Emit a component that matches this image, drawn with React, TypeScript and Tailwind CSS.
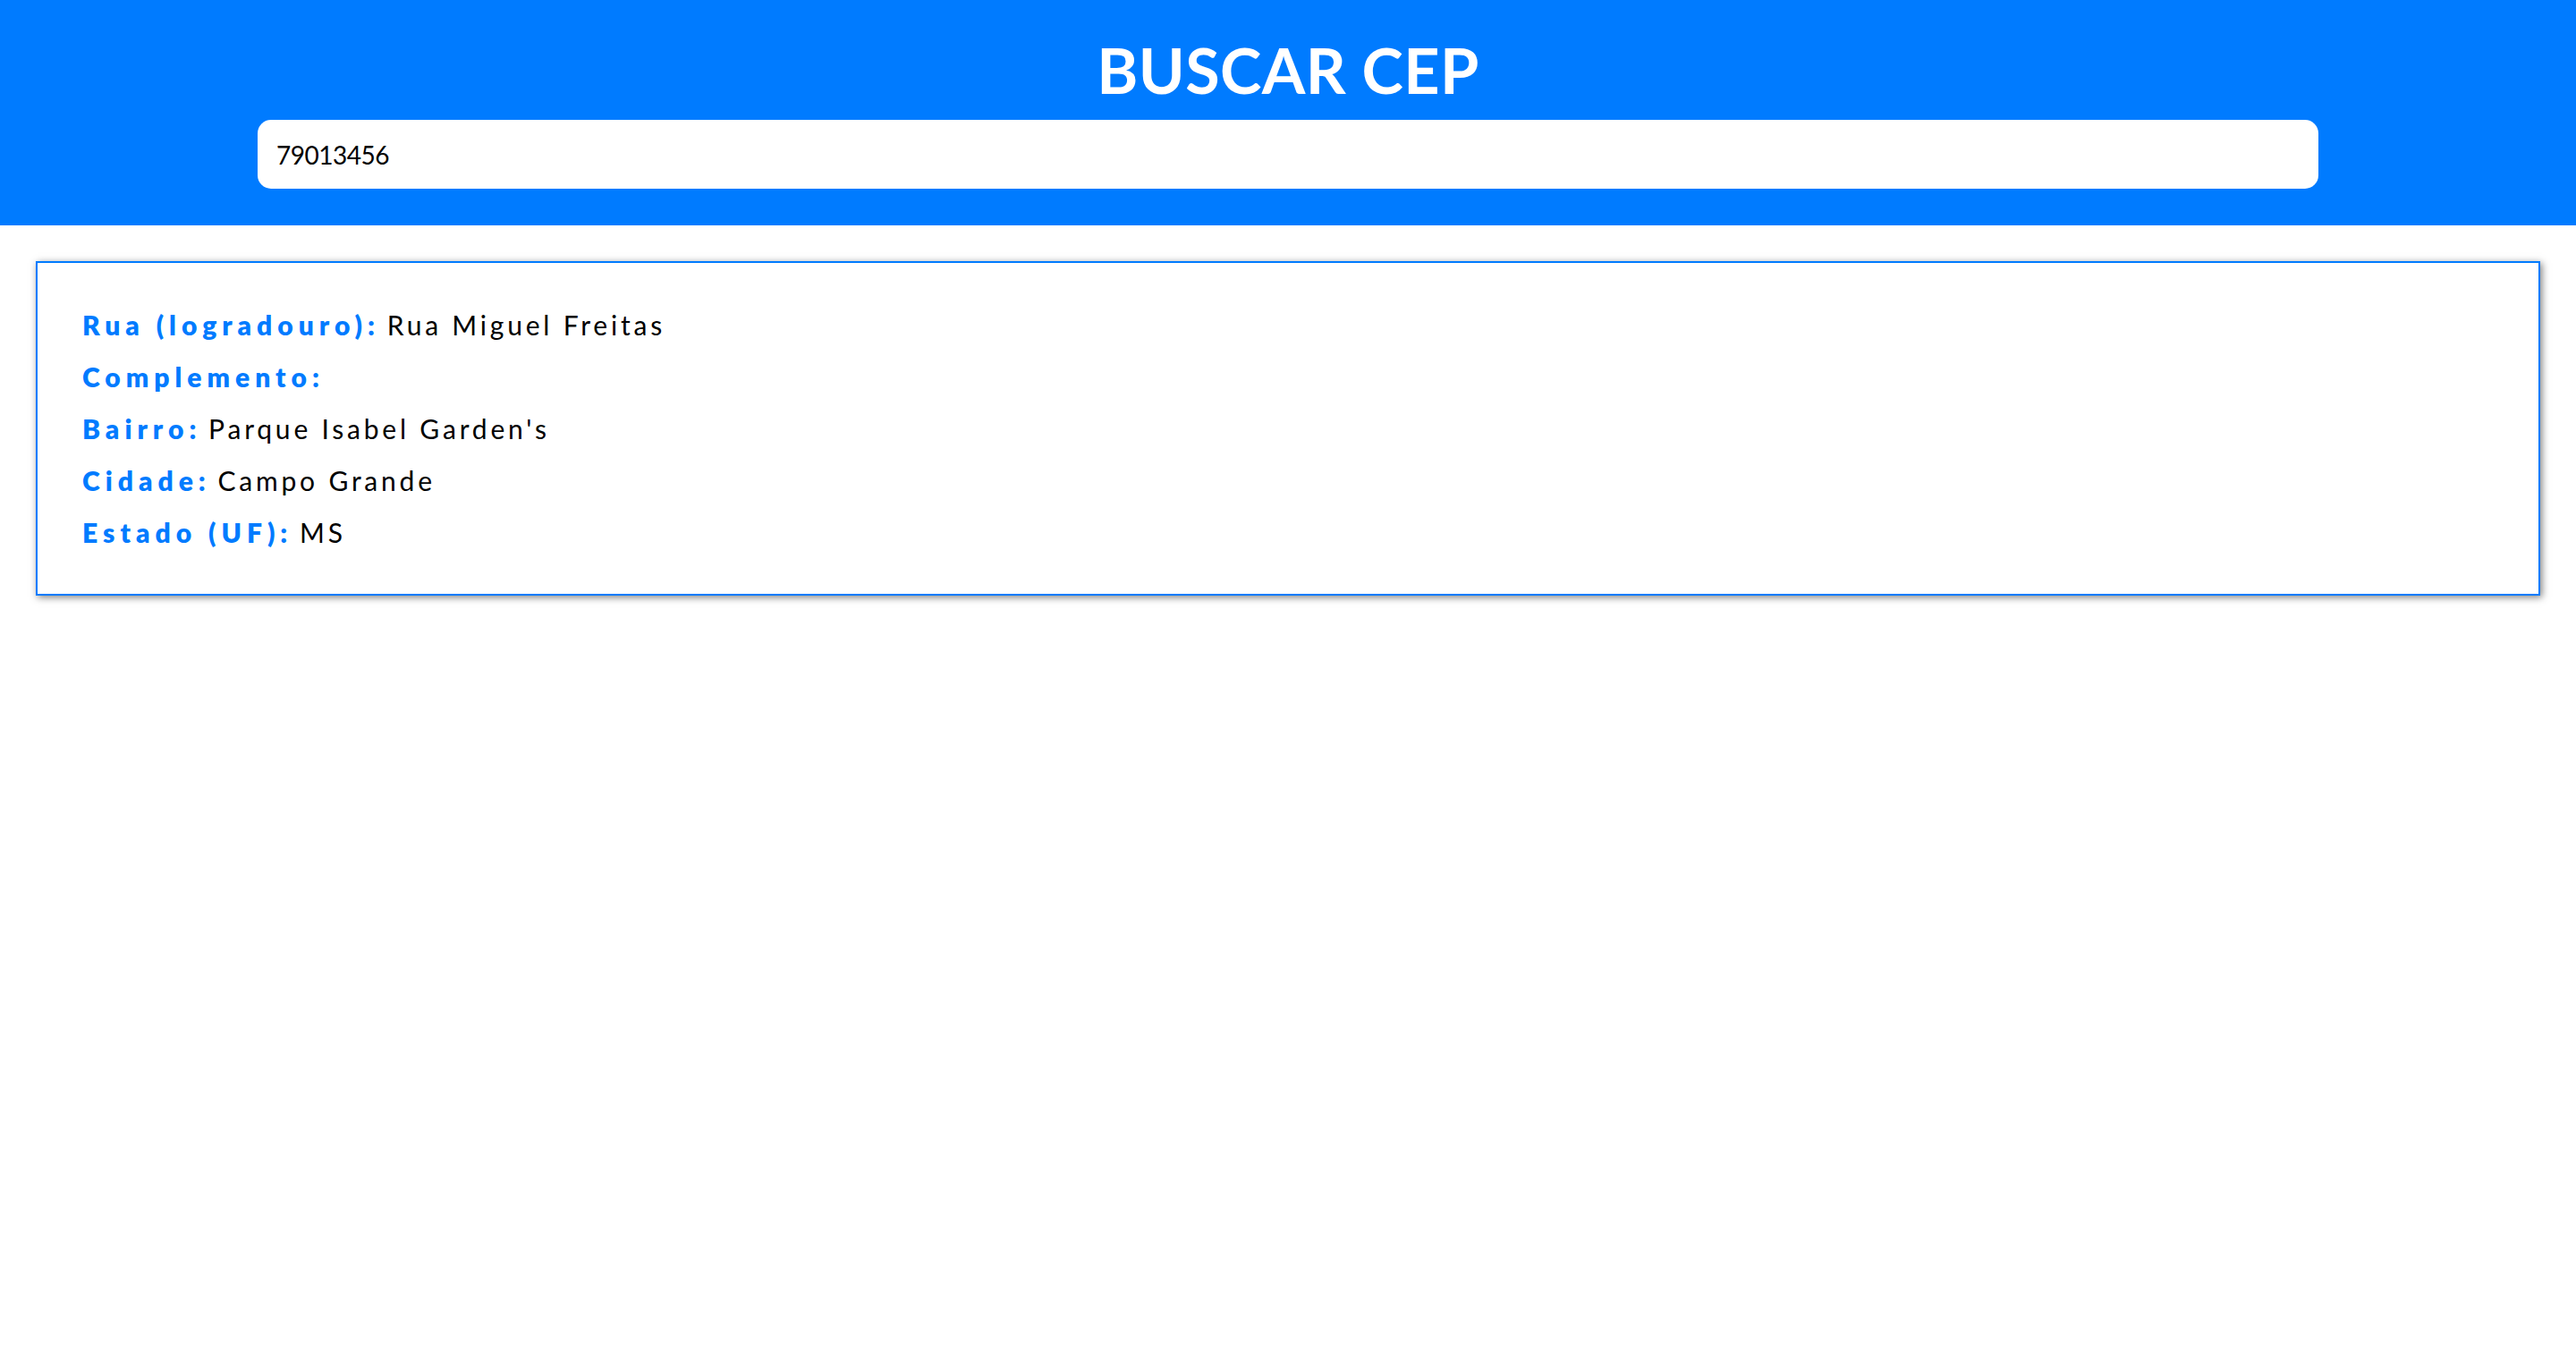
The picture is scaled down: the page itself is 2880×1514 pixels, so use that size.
import React, { useState } from "react";

const endereco = [
  { label: "Rua (logradouro):", valor: "Rua Miguel Freitas" },
  { label: "Complemento:", valor: "" },
  { label: "Bairro:", valor: "Parque Isabel Garden's" },
  { label: "Cidade:", valor: "Campo Grande" },
  { label: "Estado (UF):", valor: "MS" },
];

const App = () => {
  const [cep, setCep] = useState("79013456");

  return (
    <div className="min-h-screen bg-white font-['Lato','Liberation_Sans',sans-serif]">
      <header className="bg-[#007bff] h-[252px] flex flex-col items-center pt-[38px]">
        <h1 className="text-white font-bold text-[70px] leading-[80px] tracking-[0.4px]">
          BUSCAR CEP
        </h1>
        <input
          className="mt-[16px] w-[80%] h-[77px] rounded-[15px] bg-white px-[21px] text-[28px] tracking-[-0.5px] text-black outline-none"
          value={cep}
          onChange={(e) => setCep(e.target.value)}
        />
      </header>

      <section className="mx-[40px] mt-[40px] border-2 border-[#007bff] bg-white shadow-[2px_2px_8px_rgba(0,0,0,0.5)] px-[50px] pt-[49px] pb-[49px]">
        <div className="flex flex-col gap-[18px]">
          {endereco.map((item) => (
            <p key={item.label} className="text-[30px] leading-[40px]">
              <b className="text-[#007bff] font-extrabold tracking-[6px]">{item.label}</b>{" "}
              <span className="text-black tracking-[3.8px]">{item.valor}</span>
            </p>
          ))}
        </div>
      </section>
    </div>
  );
};

export default App;
